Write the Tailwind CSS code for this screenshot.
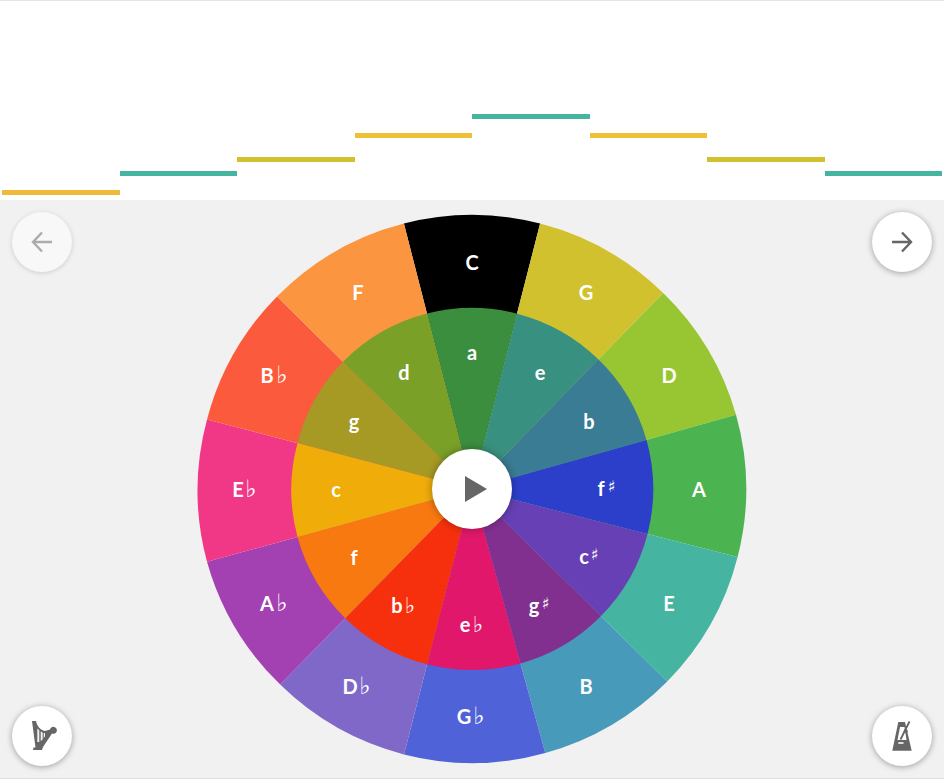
<!doctype html>
<html><head><meta charset="utf-8"><script src="https://cdn.jsdelivr.net/npm/@tailwindcss/browser@4"></script></head>
<body class="m-0 bg-[#f1f1f1] font-['Lato',sans-serif]">
<div class="relative w-[944px] h-[779px] overflow-hidden border-b border-[#dddddd] box-border">
  <div class="h-[200px] bg-white border-t border-[#e4e4e4] box-border flex items-end pl-[2px] pr-[2px]">
    <div class="w-[118px] h-[5px] mb-[5px] bg-[#f0b93a]"></div>
    <div class="w-[117px] h-[5px] mb-[24px] bg-[#45b5a1]"></div>
    <div class="w-[118px] h-[5px] mb-[38px] bg-[#d2c12e]"></div>
    <div class="w-[117px] h-[5px] mb-[62px] bg-[#eec035]"></div>
    <div class="w-[118px] h-[5px] mb-[81px] bg-[#45b5a1]"></div>
    <div class="w-[117px] h-[5px] mb-[62px] bg-[#eec035]"></div>
    <div class="w-[118px] h-[5px] mb-[38px] bg-[#d2c12e]"></div>
    <div class="w-[117px] h-[5px] mb-[24px] bg-[#45b5a1]"></div>
  </div>

  <svg class="absolute left-0 top-0" width="944" height="779" viewBox="0 0 944 779" font-family="Lato, sans-serif" font-weight="700" fill="#fff" text-anchor="middle">
    <g id="outer">
      <path fill="#000000" d="M472 489 L403.9 223.6 A274 274 0 0 1 540.1 223.6 Z"/>
      <path fill="#d2c12e" d="M472 489 L540.1 223.6 A274 274 0 0 1 663.2 293 Z"/>
      <path fill="#98c632" d="M472 489 L663.2 293 A274 274 0 0 1 736 414.8 Z"/>
      <path fill="#4bb34f" d="M472 489 L736 414.8 A274 274 0 0 1 737.6 557 Z"/>
      <path fill="#45b5a1" d="M472 489 L737.6 557 A274 274 0 0 1 667.2 681.5 Z"/>
      <path fill="#479aba" d="M472 489 L667.2 681.5 A274 274 0 0 1 545.3 753 Z"/>
      <path fill="#5062d8" d="M472 489 L545.3 753 A274 274 0 0 1 404 754.4 Z"/>
      <path fill="#8068c8" d="M472 489 L404 754.4 A274 274 0 0 1 280.2 684.6 Z"/>
      <path fill="#a340b2" d="M472 489 L280.2 684.6 A274 274 0 0 1 207 561.8 Z"/>
      <path fill="#f03887" d="M472 489 L207 561.8 A274 274 0 0 1 207 419.5 Z"/>
      <path fill="#fb5a3d" d="M472 489 L207 419.5 A274 274 0 0 1 277 296.5 Z"/>
      <path fill="#fb9540" d="M472 489 L277 296.5 A274 274 0 0 1 403.9 223.6 Z"/>
    </g>
    <g id="inner">
      <path fill="#3c8e3f" d="M472 489 L427 313.6 A181 181 0 0 1 517 313.7 Z"/>
      <path fill="#389180" d="M472 489 L517 313.7 A181 181 0 0 1 598.3 359.3 Z"/>
      <path fill="#3a7c94" d="M472 489 L598.3 359.3 A181 181 0 0 1 646.5 440 Z"/>
      <path fill="#2c3fca" d="M472 489 L646.5 440 A181 181 0 0 1 647.5 534 Z"/>
      <path fill="#6640b4" d="M472 489 L647.5 534 A181 181 0 0 1 601 616 Z"/>
      <path fill="#823090" d="M472 489 L601 616 A181 181 0 0 1 520.5 663.4 Z"/>
      <path fill="#e0176a" d="M472 489 L520.5 663.4 A181 181 0 0 1 427 664.3 Z"/>
      <path fill="#f6300c" d="M472 489 L427 664.3 A181 181 0 0 1 345.2 618.2 Z"/>
      <path fill="#f8790f" d="M472 489 L345.2 618.2 A181 181 0 0 1 297.5 537 Z"/>
      <path fill="#f0ad0a" d="M472 489 L297.5 537 A181 181 0 0 1 297.5 443 Z"/>
      <path fill="#a69a25" d="M472 489 L297.5 443 A181 181 0 0 1 343 361.8 Z"/>
      <path fill="#7aa028" d="M472 489 L343 361.8 A181 181 0 0 1 427 313.6 Z"/>
    </g>
    <g font-size="20">
      <text x="472" y="270">C</text><text x="586" y="300">G</text><text x="669" y="383">D</text><text x="699" y="497">A</text>
      <text x="669" y="611">E</text><text x="586" y="694">B</text>
      <text x="464" y="724">G<tspan x="479" font-family="DejaVu Sans" font-weight="400" font-size="24">♭</tspan></text>
      <text x="350" y="694">D<tspan x="365" font-family="DejaVu Sans" font-weight="400" font-size="24">♭</tspan></text>
      <text x="267" y="611">A<tspan x="282" font-family="DejaVu Sans" font-weight="400" font-size="24">♭</tspan></text>
      <text x="238" y="497">E<tspan x="251" font-family="DejaVu Sans" font-weight="400" font-size="24">♭</tspan></text>
      <text x="267" y="383">B<tspan x="282" font-family="DejaVu Sans" font-weight="400" font-size="24">♭</tspan></text>
      <text x="358" y="300">F</text>
    </g>
    <g font-size="20">
      <text x="472" y="360">a</text><text x="540" y="380">e</text><text x="589" y="429">b</text>
      <text x="601" y="496">f<tspan x="611.500" y="492" font-family="DejaVu Sans" font-weight="400" font-size="16">♯</tspan></text>
      <text x="584" y="564">c<tspan x="594.500" y="560" font-family="DejaVu Sans" font-weight="400" font-size="16">♯</tspan></text>
      <text x="534" y="613">g<tspan x="545.500" y="609" font-family="DejaVu Sans" font-weight="400" font-size="16">♯</tspan></text>
      <text x="465" y="632">e<tspan x="478" font-family="DejaVu Sans" font-weight="400" font-size="22">♭</tspan></text>
      <text x="397" y="613">b<tspan x="410" font-family="DejaVu Sans" font-weight="400" font-size="22">♭</tspan></text>
      <text x="354" y="565">f</text><text x="336" y="497">c</text><text x="354" y="429">g</text><text x="404" y="380">d</text>
    </g>
  </svg>

  <button class="absolute left-[432px] top-[449px] w-20 h-20 rounded-full bg-white shadow-[0_0_8px_rgba(0,0,0,0.35)] flex items-center justify-center">
    <svg class="ml-2" width="24" height="28" viewBox="0 0 24 28"><path d="M1 1 L23 14 L1 27 Z" fill="#666"/></svg>
  </button>

  <button class="absolute left-3 top-[212px] w-[60px] h-[60px] rounded-full bg-[#f8f8f8] shadow-[0_1px_5px_rgba(0,0,0,0.15)] flex items-center justify-center">
    <svg width="24" height="24" viewBox="0 0 24 24" fill="none" stroke="#ababab" stroke-width="2.4"><path d="M22 12H3M12 2.500L3 12l9 9.500"/></svg>
  </button>
  <button class="absolute left-[872px] top-[212px] w-[60px] h-[60px] rounded-full bg-white shadow-[0_1px_6px_rgba(0,0,0,0.35)] flex items-center justify-center">
    <svg width="24" height="24" viewBox="0 0 24 24" fill="none" stroke="#666" stroke-width="2.4"><path d="M2 12H21M12 2.500l9 9.500-9 9.500"/></svg>
  </button>
  <button class="absolute left-3 top-[706px] w-[60px] h-[60px] rounded-full bg-white shadow-[0_1px_6px_rgba(0,0,0,0.35)]">
    <svg class="absolute left-0 top-0" width="60" height="60" viewBox="0 0 60 60" fill="#666"><path d="M20 15H24C25 20 28 24 33 25L38 23.500A3.500 3.500 0 1 1 40 27.500L31 41 30 44H21L21.500 41.500H23.500Z"/><path d="M25.300 22.500L27.300 24.300V36H25.300ZM28.700 25.500L30.700 26.500V33.500L28.700 35ZM31.700 27H33V30.500L31.700 32Z" fill="#f0f0f0"/></svg>
  </button>
  <button class="absolute left-[872px] top-[706px] w-[60px] h-[60px] rounded-full bg-white shadow-[0_1px_6px_rgba(0,0,0,0.35)]">
    <svg class="absolute left-0 top-0" width="60" height="60" viewBox="0 0 60 60" fill="#666"><path d="M26.300 16H33L39.700 44.700H20.300Z"/><path d="M28 21H32.500L34.500 34H25.500Z" fill="#fff"/><path d="M26.300 36.200H31.500V37.800H26.300Z" fill="#fff"/><path d="M28.500 33.500L37.500 15.500" stroke="#666" stroke-width="1.800" fill="none"/><path d="M32.500 23L36 24.500 35 27.500 31.500 26Z"/></svg>
  </button>
</div>
</body></html>
